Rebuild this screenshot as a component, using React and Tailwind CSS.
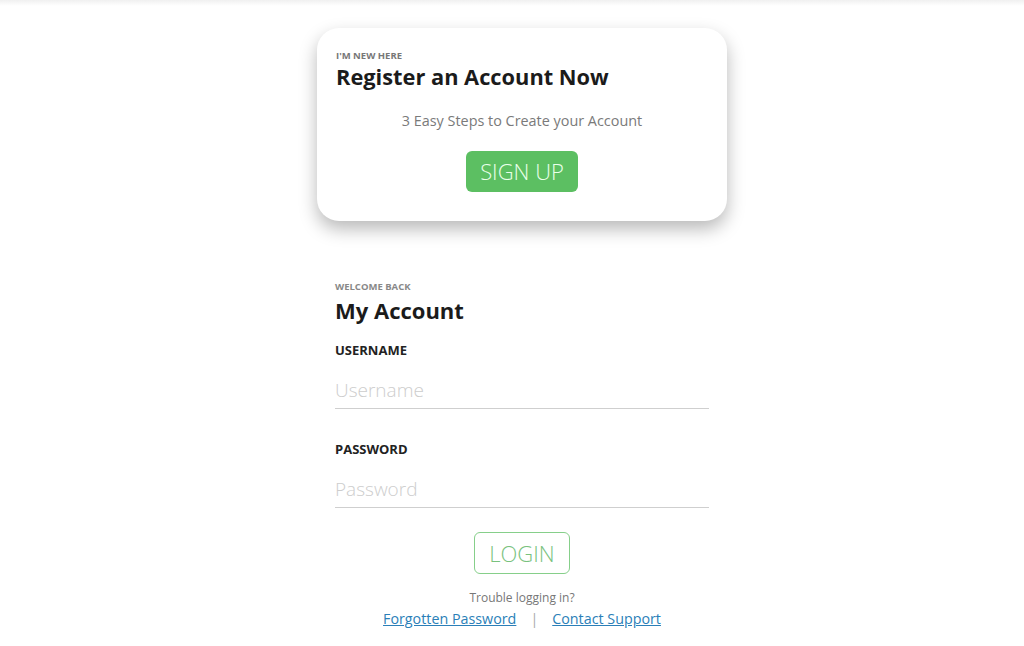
export default function App() {
  return (
    <div className="min-h-[646px] bg-white font-['Open_Sans',sans-serif]">
      {/* faint header shadow */}
      <div className="h-[6px] bg-gradient-to-b from-[#f0f0f0] to-white" />

      <div className="flex flex-col items-center pl-[20px] pt-[22px]">
        {/* Register card */}
        <div className="w-[410px] rounded-[22px] bg-white px-[19px] pt-[22px] pb-[29px] shadow-[0_8px_18px_rgba(0,0,0,0.28)]">
          <p className="text-[9.5px] font-bold leading-[12px] text-[#777] uppercase">I'm new here</p>
          <h2 className="mt-[1px] text-[21.8px] font-bold leading-[28px] text-[#1b1b1b]">Register an Account Now</h2>
          <p className="mt-[20px] text-center text-[14.4px] leading-[20px] text-[#7a7a7a]">3 Easy Steps to Create your Account</p>
          <div className="mt-[20px] flex justify-center">
            <button className="h-[41px] w-[112px] rounded-[6px] bg-[#5cbf62] text-[22px] font-light text-[#eaffea]">
              SIGN UP
            </button>
          </div>
        </div>

        {/* Login form */}
        <div className="mt-[60px] w-[374px]">
          <p className="text-[9.5px] font-bold leading-[12px] text-[#888] uppercase">Welcome back</p>
          <h2 className="mt-[3px] text-[22px] font-bold leading-[28px] text-[#1b1b1b]">My Account</h2>

          <label className="mt-[17px] block text-[13px] font-bold leading-[18px] text-[#222]">USERNAME</label>
          <input
            type="text"
            placeholder="Username"
            className="mt-[13px] block h-[37px] w-full border-b border-[#cfcfcf] text-[19px] font-light text-[#333] outline-none placeholder:text-[#cdcdcd]"
          />

          <label className="mt-[31px] block text-[13px] font-bold leading-[18px] text-[#222]">PASSWORD</label>
          <input
            type="password"
            placeholder="Password"
            className="mt-[13px] block h-[37px] w-full border-b border-[#cfcfcf] text-[19px] font-light text-[#333] outline-none placeholder:text-[#cdcdcd]"
          />

          <div className="mt-[24px] flex justify-center">
            <button className="h-[42px] w-[96px] rounded-[6px] border border-[#86cf8a] text-[22px] font-light text-[#79c27e]">
              LOGIN
            </button>
          </div>

          <p className="mt-[16px] text-center text-[12px] leading-[16px] text-[#777]">Trouble logging in?</p>
          <p className="mt-[3px] flex justify-center gap-[14px] text-[14.3px] leading-[20px]">
            <a href="#" className="text-[#2b7fb8] underline">Forgotten Password</a>
            <span className="text-[#aaa]">|</span>
            <a href="#" className="text-[#2b7fb8] underline">Contact Support</a>
          </p>
        </div>
      </div>
    </div>
  );
}
